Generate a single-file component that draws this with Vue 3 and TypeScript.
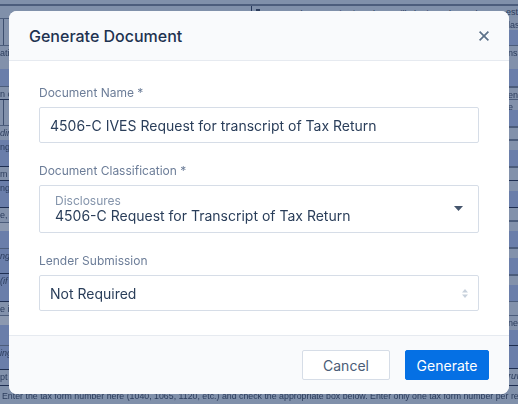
<script setup lang="ts">
interface Row { h: number; tone: string; text?: string; italic?: boolean; cells?: boolean }

const leftRows: Row[] = [
  { h: 1, tone: 'dark' },
  { h: 26, tone: 'grey', cells: true },
  { h: 1, tone: 'dark' },
  { h: 23, tone: 'grey', text: 'ati' },
  { h: 17, tone: 'blue' },
  { h: 1, tone: 'dark' },
  { h: 12, tone: 'grey', text: 'n o' },
  { h: 1, tone: 'ink' },
  { h: 25, tone: 'grey', cells: true },
  { h: 1, tone: 'dark' },
  { h: 14, tone: 'grey', text: 'din', italic: true },
  { h: 26, tone: 'blue', text: 'ng' },
  { h: 1, tone: 'ink' },
  { h: 13, tone: 'grey', text: 'm i' },
  { h: 1, tone: 'ink' },
  { h: 26, tone: 'blue', text: 'ng' },
  { h: 1, tone: 'ink' },
  { h: 14, tone: 'grey', text: 'e, l' },
  { h: 1, tone: 'dark' },
  { h: 8, tone: 'pale' },
  { h: 17, tone: 'blue' },
  { h: 1, tone: 'dark' },
  { h: 24, tone: 'blue', text: 'ng', italic: true },
  { h: 1, tone: 'ink' },
  { h: 27, tone: 'blue', text: '(if', italic: true },
  { h: 1, tone: 'ink' },
  { h: 13, tone: 'grey', text: 'e i' },
  { h: 1, tone: 'dark' },
  { h: 9, tone: 'pale' },
  { h: 20, tone: 'blue' },
  { h: 1, tone: 'dark' },
  { h: 23, tone: 'blue', text: 'ing', italic: true },
  { h: 1, tone: 'ink' },
  { h: 15, tone: 'grey', text: 'pt' },
  { h: 1, tone: 'ink' }
]

const rightRows: Row[] = [
  { h: 12, tone: 'grey', text: 'las' },
  { h: 15, tone: 'blue' },
  { h: 1, tone: 'dark' },
  { h: 23, tone: 'grey', text: 'ns' },
  { h: 17, tone: 'blue' },
  { h: 2, tone: 'dark' },
  { h: 11, tone: 'grey', text: 'en' },
  { h: 1, tone: 'dark' },
  { h: 10, tone: 'grey', text: 'e' },
  { h: 16, tone: 'blue' },
  { h: 2, tone: 'dark' },
  { h: 11, tone: 'grey' },
  { h: 2, tone: 'dark' },
  { h: 9, tone: 'grey' },
  { h: 16, tone: 'blue' },
  { h: 2, tone: 'dark' },
  { h: 12, tone: 'grey' },
  { h: 1, tone: 'ink' },
  { h: 10, tone: 'grey' },
  { h: 16, tone: 'blue' },
  { h: 1, tone: 'ink' },
  { h: 12, tone: 'grey' },
  { h: 2, tone: 'dark' },
  { h: 9, tone: 'grey' },
  { h: 16, tone: 'blue' },
  { h: 2, tone: 'dark' },
  { h: 9, tone: 'grey' },
  { h: 16, tone: 'blue' },
  { h: 2, tone: 'dark' },
  { h: 9, tone: 'grey' },
  { h: 16, tone: 'blue' },
  { h: 1, tone: 'dark' },
  { h: 13, tone: 'grey' },
  { h: 1, tone: 'dark' },
  { h: 14, tone: 'grey', text: 'ne' },
  { h: 15, tone: 'blue' },
  { h: 1, tone: 'ink' },
  { h: 22, tone: 'blue' },
  { h: 1, tone: 'ink' },
  { h: 16, tone: 'grey', text: 'ruv', italic: true },
  { h: 1, tone: 'ink' }
]
</script>

<template>
  <div class="page">
    <div class="form" aria-hidden="true">
      <div class="form-top">
        <div class="form-rule"></div>
        <div class="form-caption">
          <span class="caption-mark"></span>
          <span class="caption-text">Once a document is signed, we will obtain and complete a request</span>
          <span class="caption-tail">est</span>
        </div>
      </div>
      <div class="form-middle">
        <div class="strip">
          <div
            v-for="(row, i) in leftRows"
            :key="i"
            class="row"
            :class="[row.tone, { italic: row.italic, cells: row.cells }]"
            :style="{ height: row.h + 'px' }"
          >{{ row.text }}</div>
        </div>
        <div class="strip">
          <div
            v-for="(row, i) in rightRows"
            :key="i"
            class="row"
            :class="[row.tone, { italic: row.italic }]"
            :style="{ height: row.h + 'px' }"
          >{{ row.text }}</div>
        </div>
      </div>
      <div class="form-bottom">Enter the tax form number here (1040, 1065, 1120, etc.) and check the appropriate box below. Enter only one tax form number per request</div>
    </div>

    <section class="modal">
      <header class="modal-head">
        <h2 class="modal-title">Generate Document</h2>
        <svg class="close" width="12" height="12" viewBox="0 0 12 12" aria-label="Close">
          <path d="M1.6 1.6 10.4 10.4M10.4 1.6 1.6 10.4" fill="none" stroke="currentColor" stroke-width="1.7" />
        </svg>
      </header>

      <div class="modal-body">
        <div class="field">
          <label class="label">Document Name *</label>
          <div class="control">4506-C IVES Request for transcript of Tax Return</div>
        </div>
        <div class="field">
          <label class="label">Document Classification *</label>
          <div class="control control-tall">
            <div class="stack">
              <span class="group">Disclosures</span>
              <span>4506-C Request for Transcript of Tax Return</span>
            </div>
            <svg class="caret" width="9" height="5" viewBox="0 0 9 5"><path d="M0 0h9L4.5 5z" fill="currentColor" /></svg>
          </div>
        </div>
        <div class="field">
          <label class="label">Lender Submission</label>
          <div class="control">
            <span>Not Required</span>
            <svg class="updown" width="6" height="9" viewBox="0 0 6 9"><path d="M3 0 6 3.6H0zM3 9 0 5.4h6z" fill="currentColor" /></svg>
          </div>
        </div>
      </div>

      <footer class="modal-foot">
        <button class="btn btn-cancel" type="button">Cancel</button>
        <button class="btn btn-primary" type="button">Generate</button>
      </footer>
    </section>
  </div>
</template>

<style>
html, body { margin: 0; padding: 0; }
</style>

<style scoped>
.page {
  position: relative;
  width: 518px;
  height: 404px;
  overflow: hidden;
  background: #8090aa;
  font-family: Inter, "Liberation Sans", sans-serif;
}

.form {
  display: flex;
  flex-direction: column;
  height: 404px;
  filter: blur(0.6px);
  font-family: "Liberation Sans", sans-serif;
  font-size: 9px;
  color: #2b3c5c;
}
.form-top { height: 18px; flex: none; overflow: hidden; background: #8090aa; }
.form-rule { height: 2px; margin-top: 4px; background: #4c5d7c; }
.form-caption {
  display: flex;
  align-items: flex-start;
  gap: 6px;
  margin-left: 251px;
  border-left: 1px solid #26375a;
  height: 12px;
}
.caption-mark { width: 4px; height: 4px; background: #2b3c5c; flex: none; margin: 3px 0 0 4px; }
.caption-text { flex: 1; min-width: 0; overflow: hidden; white-space: nowrap; line-height: 12px; padding-top: 2px; }
.caption-tail { flex: none; line-height: 12px; }

.form-middle { display: flex; justify-content: space-between; flex: none; height: 368px; }
.strip { width: 10px; overflow: hidden; flex: none; }
.row {
  box-sizing: border-box;
  width: 10px;
  overflow: hidden;
  white-space: nowrap;
  line-height: 14px;
}
.grey { background: #8291ab; }
.pale { background: #8c99b0; }
.blue { background: #6a7eaa; }
.dark { background: #4c5d7c; }
.ink { background: #1f2f52; }
.italic { font-style: italic; }
.cells { background: linear-gradient(90deg, #8291ab 3px, #3d4e6e 3px, #3d4e6e 4px, #8291ab 4px); }

.form-bottom {
  flex: 1;
  background: #8090aa;
  padding: 5px 0 0 2px;
  font-size: 8.8px;
  line-height: 11px;
  white-space: nowrap;
  overflow: hidden;
}

.modal {
  position: absolute;
  left: 9px;
  top: 11px;
  width: 500px;
  height: 383px;
  display: flex;
  flex-direction: column;
  border-radius: 8px;
  overflow: hidden;
  background: #fff;
}

.modal-head {
  flex: none;
  box-sizing: border-box;
  height: 50px;
  display: flex;
  align-items: center;
  justify-content: space-between;
  padding: 0 19px 0 20px;
  background: #f9fafc;
  border-bottom: 1px solid #e6eaf0;
}
.modal-title {
  margin: 0;
  font-size: 16px;
  font-weight: 500;
  line-height: 20px;
  color: #1e3250;
}
.close { color: #5d7189; }

.modal-body {
  flex: 1;
  display: flex;
  flex-direction: column;
  gap: 20px;
  padding: 24px 30px 0;
}
.field { display: flex; flex-direction: column; gap: 6px; }
.label {
  font-size: 12px;
  line-height: 16px;
  color: #6c7d98;
}
.control {
  box-sizing: border-box;
  height: 36px;
  display: flex;
  align-items: center;
  justify-content: space-between;
  padding: 0 10px;
  border: 1px solid #d6dde7;
  border-radius: 2px;
  font-size: 14px;
  color: #2a3e5a;
  background: #fff;
}
.control-tall { height: 48px; padding-right: 15px; padding-left: 15px; }
.stack { display: flex; flex-direction: column; }
.stack span { line-height: 16px; }
.stack .group { font-size: 12px; line-height: 14px; color: #8494ab; }
.caret { color: #45556c; margin-top: -2px; }
.updown { color: #c8d1dc; }

.modal-foot {
  flex: none;
  box-sizing: border-box;
  height: 59px;
  display: flex;
  align-items: center;
  justify-content: flex-end;
  gap: 15px;
  padding: 0 20px 0 0;
  background: #f9fafc;
  border-top: 1px solid #e6eaf0;
}
.btn {
  box-sizing: border-box;
  height: 30px;
  border-radius: 2px;
  font-family: inherit;
  font-size: 14px;
  padding: 0;
}
.btn-cancel { width: 88px; background: #fff; border: 1px solid #d6dde7; color: #4a5c76; }
.btn-primary { width: 84px; background: #0570e4; border: 1px solid #0570e4; color: #fff; }
</style>
